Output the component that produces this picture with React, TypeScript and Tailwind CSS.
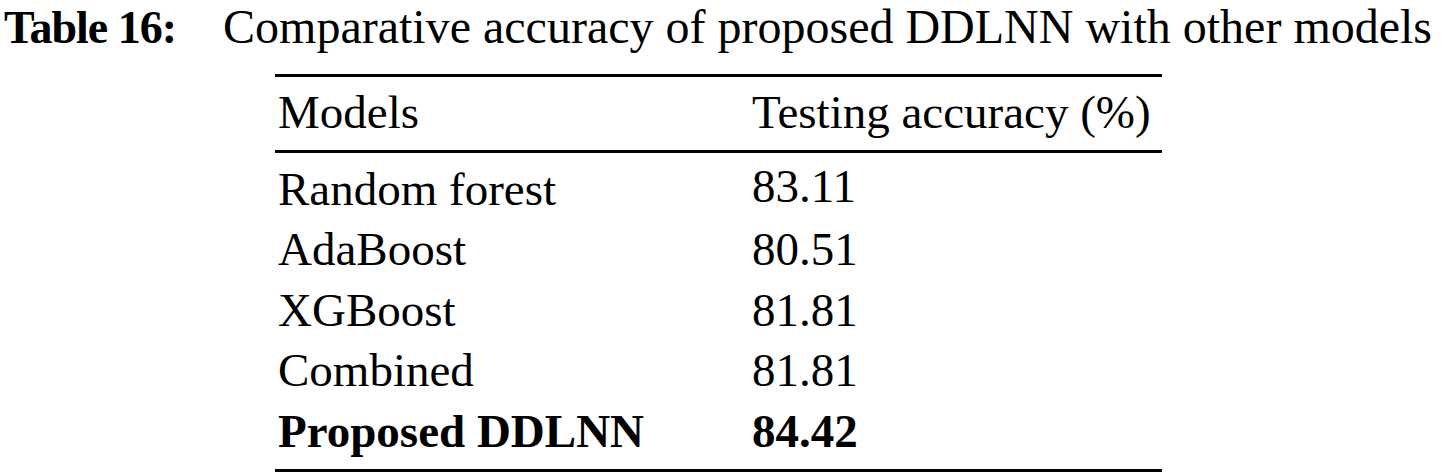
const rows = [
  { model: "Random forest", acc: "83.11" },
  { model: "AdaBoost", acc: "80.51" },
  { model: "XGBoost", acc: "81.81" },
  { model: "Combined", acc: "81.81" },
];

export default function App() {
  return (
    <div className="w-[1442px] h-[475px] bg-white text-black font-[family-name:Liberation_Serif,serif] flex flex-col items-center overflow-hidden">
      {/* Caption */}
      <p className="self-start ml-[4px] text-[48px] leading-[54px] whitespace-nowrap">
        <span className="font-bold text-[46px] tracking-[-1px]">Table 16:</span>
        <span className="ml-[47px]">Comparative accuracy of proposed DDLNN with other models</span>
      </p>

      {/* Table */}
      <table className="mt-[19px] mr-[5px] w-[887px] border-collapse text-[47px] leading-[60.5px]">
        <thead>
          <tr className="border-t-[3px] border-b-[3px] border-black">
            <th className="w-[477px] pl-[3px] pt-[5px] pb-[7px] text-left font-normal">Models</th>
            <th className="text-left font-normal pt-[5px] pb-[7px]">Testing accuracy (%)</th>
          </tr>
        </thead>
        <tbody className="border-b-[3px] border-black">
          {rows.map((r, i) => (
            <tr key={r.model}>
              <td className={`pl-[3px] ${i === 0 ? "pt-[6px]" : ""}`}>{r.model}</td>
              <td>{r.acc}</td>
            </tr>
          ))}
          <tr className="font-bold">
            <td className="pl-[3px] pb-[8px]">Proposed DDLNN</td>
            <td className="pb-[8px]">84.42</td>
          </tr>
        </tbody>
      </table>
    </div>
  );
}
